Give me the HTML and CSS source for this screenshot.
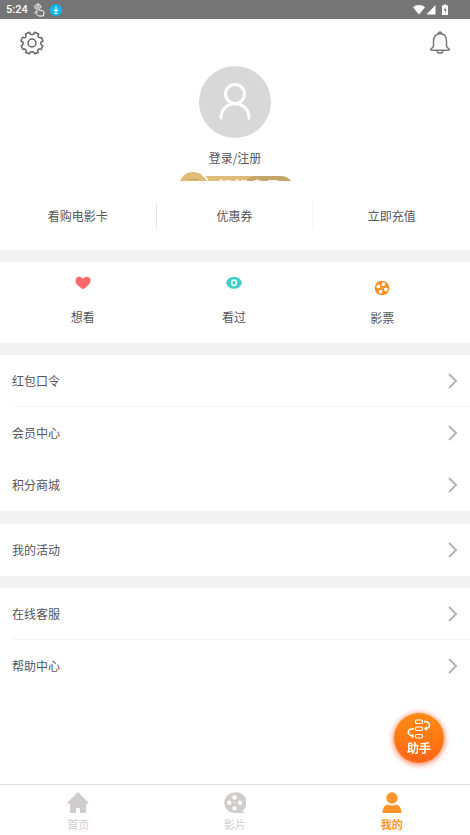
FILE: index.html
```html
<!DOCTYPE html>
<html lang="zh-CN">
<head>
<meta charset="utf-8">
<meta name="viewport" content="width=device-width, initial-scale=1">
<title>我的</title>
<link rel="stylesheet" href="styles.css">
</head>
<body>
<div class="status">
  <span class="time">5:24</span>
  <svg class="touch" width="12" height="14" viewBox="0 0 12 14" fill="none" stroke="#fff" stroke-width="1" stroke-linejoin="round" stroke-linecap="round"><path d="M4 9V3.200a1 1 0 0 1 2 0V7l4 1c1 .3 1.200 1 1 2l-.6 3H5.500L2 9.500c.2-.9 1-.9 2 0M2 5.500A3.200 3.200 0 1 1 8 5"/></svg>
  <svg width="12" height="12" viewBox="0 0 12 12"><circle cx="6" cy="6" r="6" fill="#08b8fa"/><path d="M6 2.500v5M4 5.500l2 2 2-2M4 9.200h4" fill="none" stroke="#fff" stroke-width="1.100"/></svg>
  <svg class="signals" width="36" height="12" viewBox="0 0 36 12" fill="#fff"><path d="M0 3.300C3.300.3 8.700.3 12 3.300L6 10.500zM22.500 1v9.500H13.500zM29 1.500h1.700V.5h2.600v1H35v9.500h-6z"/><path d="M32.600 3l-2 3.500h1.300V9l2-3.500h-1.300z" fill="#757575"/></svg>
</div>
<header class="profile">
  <div class="tools">
    <button class="tool" aria-label="设置"><svg width="24" height="24" viewBox="0 0 24 24" fill="none" stroke="#66666b" stroke-width="1.500" stroke-linejoin="round"><path d="M9.500 1.300L10.500 3.200Q12 3.900 13.500 3.200L14.500 1.300L18.600 3L18 5.300Q18.500 6.600 20 6.800L21.600 6.500L23 10L21 11.200Q20.500 12.500 21 13.500L22.800 14.800L21.200 18.400L19 18Q17.700 18.300 17.700 19.800L18.200 21.500L14.600 22.800L13.400 21Q12 20.300 10.600 21L9.400 22.800L5.700 21.500L6.200 19.500Q6 18.200 4.700 18L2.800 18.300L1.200 14.800L2.900 13.500Q3.500 12.200 2.900 11L1 9.800L2.500 6.300L4.600 6.700Q6 6.300 6 5L5.500 3z"/><circle cx="12" cy="12" r="4"/></svg></button>
    <button class="tool" aria-label="消息"><svg width="24" height="24" viewBox="0 0 24 24" fill="none" stroke="#77777c" stroke-width="1.500" stroke-linejoin="round"><path d="M10.200 2.700a1.800 1.800 0 1 1 3.600 0M5.500 15v-5C5.500 5.500 8 2.800 12 2.800s6.500 2.700 6.500 7.200v5q.5 2 2.500 2.800.8 1.500-.8 1.500H3.800q-1.600 0-.8-1.500Q5 17 5.500 15z"/><path d="M9 19.800c.5 3 5.500 3 6 0"/></svg></button>
  </div>
  <a class="login" href="#login">
    <svg class="avatar" width="72" height="72" viewBox="0 0 72 72"><circle cx="36" cy="36" r="36" fill="#d8d8d8"/><g fill="none" stroke="#fff" stroke-width="3" stroke-linecap="round"><circle cx="36" cy="28" r="9.500"/><path d="M22 52c0-19 28-19 28 0"/></g></svg>
    <span>登录/注册</span>
  </a>
  <div class="member">
    <svg width="112" height="9" viewBox="-1 0 112 9"><path d="M8 4h92q7 0 11 5H0z" fill="#dfbd79"/><path d="M65 9q5-5 12-5h23q7 0 11 5z" fill="#c6a56a"/><path d="M0 9Q4 0 13 0q9 0 15 9z" fill="#dfbd79"/><path d="M8 7.500h10" stroke="#cba968" stroke-width="1.500"/><path d="M22 2.500q4 2.500 6 6.500" fill="none" stroke="#fff" stroke-width="1.500"/><path d="M39 8.500h4M45 8.500h6M55 8.500h4M61 8.500h6M74 8.500h6M88 8.500h10" stroke="#fbf3e2" stroke-width="1.200"/><path d="M41 7v2M57 7v2M77 7v2" stroke="#fbf3e2"/></svg>
  </div>
  <nav class="wallet"><a href="#card">看购电影卡</a><a href="#coupon">优惠券</a><a href="#topup">立即充值</a></nav>
</header>
<main>
<nav class="records">
  <a href="#want"><svg width="16" height="16" viewBox="0 0 16 16"><path d="M8 14.300C3.500 11.200.5 8.800.5 5.500.5 1.400 5.800.5 8 4c2.200-3.500 7.500-2.600 7.500 1.500 0 3.300-3 5.700-7.500 8.800z" fill="#ff6866"/></svg><span>想看</span></a>
  <a href="#seen"><svg width="16" height="16" viewBox="0 0 16 16"><path d="M0 7.700q2-6 8-6t8 6q-2 6-8 6t-8-6z" fill="#40cdc8"/><ellipse cx="8" cy="7.700" rx="2.300" ry="2.700" fill="none" stroke="#fff" stroke-width="1.500"/></svg><span>看过</span></a>
  <a class="ticket" href="#ticket"><svg width="16" height="16" viewBox="0 0 16 16"><circle cx="8" cy="8" r="7.300" fill="#ff8c14"/><g fill="#fff"><circle cx="9.500" cy="4.200" r="1.900"/><circle cx="4.300" cy="6.500" r="1.900"/><circle cx="6.600" cy="11.700" r="1.900"/><circle cx="11.900" cy="9.500" r="1.900"/><circle cx="8" cy="8" r=".7"/></g></svg><span>影票</span></a>
</nav>
<section class="group">
  <a class="row line" href="#code">红包口令<svg class="chev" viewBox="0 0 10 16"><path d="M1 1l7 7-7 7"/></svg></a>
  <a class="row" href="#vip">会员中心<svg class="chev" viewBox="0 0 10 16"><path d="M1 1l7 7-7 7"/></svg></a>
  <a class="row" href="#points">积分商城<svg class="chev" viewBox="0 0 10 16"><path d="M1 1l7 7-7 7"/></svg></a>
</section>
<section class="group events">
  <a class="row" href="#events">我的活动<svg class="chev" viewBox="0 0 10 16"><path d="M1 1l7 7-7 7"/></svg></a>
</section>
<section class="group">
  <a class="row line" href="#service">在线客服<svg class="chev" viewBox="0 0 10 16"><path d="M1 1l7 7-7 7"/></svg></a>
  <a class="row" href="#help">帮助中心<svg class="chev" viewBox="0 0 10 16"><path d="M1 1l7 7-7 7"/></svg></a>
</section>
</main>
<button class="helper">
  <svg width="24" height="20" viewBox="0 0 24 20" fill="none" stroke="#fff" stroke-width="1.200"><rect x="8.500" y="1" width="7" height="3.500" rx="1.200"/><rect x="8.500" y="8" width="7" height="3.500" rx="1.200"/><rect x="8.500" y="15.500" width="7" height="3.500" rx="1.200"/><path d="M17 2.500c7 0 7.500 7 1 7.200M7 9.700c-7.500 0-7.500 7-1 7.300" stroke-width="1.600"/><path d="M20 7v5l-3-2.500zM4.500 14.500v5l3-2.500z" fill="#fff" stroke="none"/></svg>
  <span>助手</span>
</button>
<nav class="tabs">
  <a href="#home"><svg width="22" height="22" viewBox="0 0 22 22" fill="#d0cccc"><path d="M11 0L.5 10.500l.5 1.200h2V20q0 1 1 1h5v-5h4v5h5q1 0 1-1v-8.300h2l.5-1.200z"/></svg><span>首页</span></a>
  <a href="#films"><svg width="22" height="22" viewBox="0 0 22 22"><path d="M10.500.5a10.300 10.300 0 1 0 0 20.600h9.500v-1.500h-2.500A10.300 10.300 0 0 0 10.500.5z" fill="#d0cccc"/><g fill="#fff"><circle cx="10.500" cy="5.500" r="2.200"/><circle cx="5.200" cy="10.800" r="2.200"/><circle cx="15.900" cy="10.800" r="2.200"/><circle cx="10.500" cy="16.200" r="2.200"/><circle cx="10.500" cy="10.800" r=".7"/></g></svg><span>影片</span></a>
  <a class="active" href="#mine"><svg width="22" height="22" viewBox="0 0 22 22" fill="#ff952a"><circle cx="11" cy="6" r="5.700"/><path d="M1.500 21c0-5 2-7.500 5-8.500q4.500 2 9 0c3 1 5 3.500 5 8.500z"/></svg><span>我的</span></a>
</nav>
</body>
</html>
```
FILE: styles.css
```css
* { box-sizing: border-box; }
body {
  margin: 0;
  min-height: 100vh;
  display: flex;
  flex-direction: column;
  background: #fff;
  color: #55555b;
  font: 12px/18px "Noto Sans CJK SC", sans-serif;
}
a { color: inherit; text-decoration: none; }
button { border: 0; padding: 0; background: none; font: inherit; cursor: pointer; }
svg { display: block; flex: none; }

.status {
  display: flex;
  align-items: center;
  height: 19px;
  padding: 0 21px 0 6px;
  gap: 5px;
  background: #757575;
  color: #fff;
}
.time { font: 500 11px/18px Roboto, sans-serif; }
.signals { margin-left: auto; }

.tools {
  display: flex;
  justify-content: space-between;
  height: 47px;
  padding: 12px 18px 0 20px;
}
.tool { height: 24px; }
.login {
  display: flex;
  flex-direction: column;
  align-items: center;
  gap: 11px;
  width: max-content;
  margin: 0 auto;
}
.member { display: flex; justify-content: center; margin-top: 5px; }
.wallet {
  display: grid;
  grid-template-columns: repeat(3, 1fr);
  height: 69px;
  padding-top: 21px;
}
.wallet a { height: 27px; line-height: 27px; text-align: center; }
.wallet a:not(:last-child) { border-right: 1px solid #e8e8e8; }
.wallet a:nth-child(2) { border-color: #f5f5f5; }

.records {
  display: grid;
  grid-template-columns: 50fr 51fr 48fr;
  height: 93px;
  padding: 13px 16px 0 8px;
  border-top: 12px solid #f2f2f2;
}
.records a { display: flex; flex-direction: column; align-items: center; gap: 17px; }
.records .ticket { padding-top: 5px; gap: 13px; }

.group { border-top: 12px solid #f2f2f2; }
.events { border-top-width: 13px; }
.row {
  display: flex;
  align-items: center;
  justify-content: space-between;
  height: 52px;
  margin-left: 12px;
  padding-right: 12px;
}
.line { border-bottom: 1px solid #f5f5f5; }
.chev { width: 10px; height: 16px; fill: none; stroke: #b5b5b5; stroke-width: 2; }

.helper {
  position: fixed;
  right: 26px;
  bottom: 72px;
  width: 50px;
  height: 50px;
  border-radius: 50%;
  display: flex;
  flex-direction: column;
  align-items: center;
  justify-content: center;
  background: linear-gradient(#ff8c10, #ff6517);
  box-shadow: 0 1px 6px #f7612f;
  color: #fff;
  font-weight: 700;
}

.tabs {
  position: sticky;
  bottom: 0;
  display: grid;
  grid-template-columns: repeat(3, 1fr);
  height: 51px;
  margin-top: auto;
  padding-top: 7px;
  border-top: 1px solid #dedede;
  background: #fff;
  color: #d0cccc;
  font-size: 11px;
}
.tabs a { display: flex; flex-direction: column; align-items: center; gap: 1px; }
.tabs .active { color: #ff952a; font-weight: 700; }
```
